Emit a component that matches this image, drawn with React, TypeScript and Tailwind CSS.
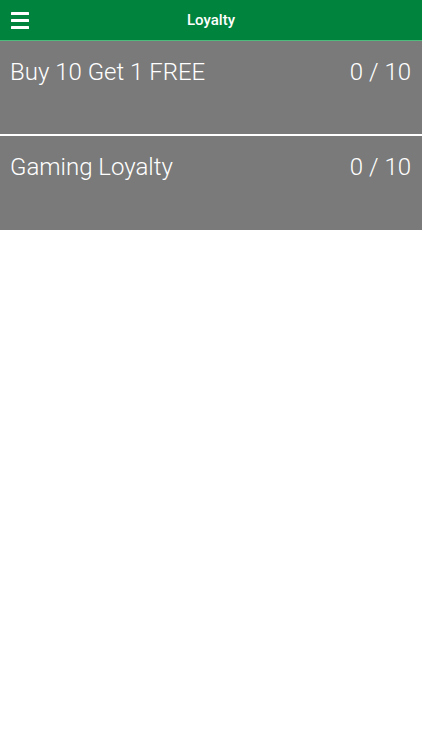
const cards = [
  { id: 'buy10', title: 'Buy 10 Get 1 FREE', count: 0, total: 10 },
  { id: 'gaming', title: 'Gaming Loyalty', count: 0, total: 10 },
];

function MenuIcon() {
  return (
    <svg width="18" height="17" viewBox="0 0 18 17" fill="#fff">
      <rect x="0" y="0" width="18" height="3" rx="0.5" />
      <rect x="0" y="7" width="18" height="3" rx="0.5" />
      <rect x="0" y="14" width="18" height="3" rx="0.5" />
    </svg>
  );
}

export default function App() {
  return (
    <div className="min-h-[750px] bg-white font-['Roboto',_'Liberation_Sans',_sans-serif]">
      <header className="relative h-[41px] bg-[#00843d] border-b border-[#4dbb7c] flex items-center justify-center">
        <button className="absolute left-[11px] top-[12px]">
          <MenuIcon />
        </button>
        <h1 className="text-white text-[15px] font-medium">Loyalty</h1>
      </header>

      <ul className="flex flex-col gap-[2px]">
        {cards.map((card) => (
          <li
            key={card.id}
            className="h-[93px] last:h-[94px] bg-[#7a7a7a] flex justify-between items-start pl-[10px] pr-[11px] pt-[15px]"
          >
            <span className="text-white text-[24px] font-light leading-[32px]">{card.title}</span>
            <span className="text-white text-[24px] font-light leading-[32px]">
              {card.count} / {card.total}
            </span>
          </li>
        ))}
      </ul>
    </div>
  );
}
